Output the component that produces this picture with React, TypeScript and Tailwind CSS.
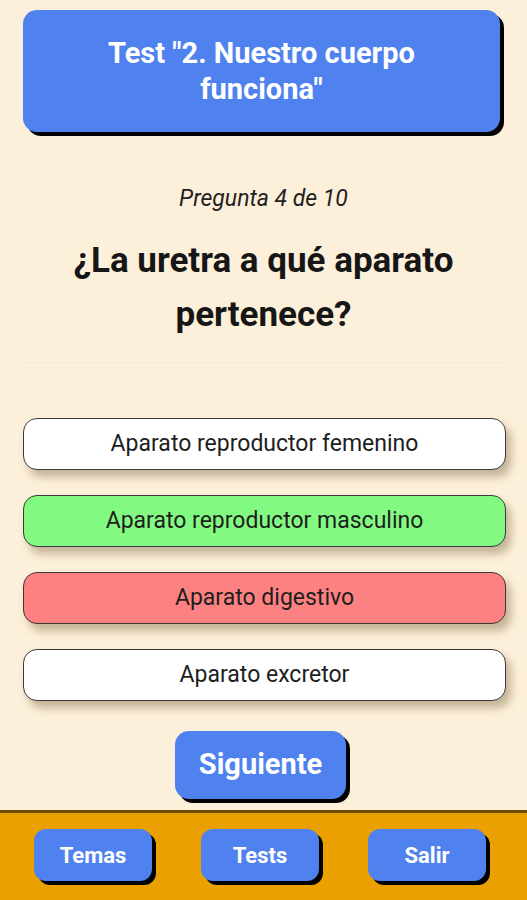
const options = [
  { label: 'Aparato reproductor femenino', bg: 'bg-white' },
  { label: 'Aparato reproductor masculino', bg: 'bg-[#82fa82]' },
  { label: 'Aparato digestivo', bg: 'bg-[#fd8181]' },
  { label: 'Aparato excretor', bg: 'bg-white' },
]

function NavButton({ label }: { label: string }) {
  return (
    <button className="w-[118px] h-[52px] rounded-[12px] bg-[#4f82ef] text-white text-[22px] font-bold shadow-[4px_4px_0_#000]">
      {label}
    </button>
  )
}

export default function App() {
  return (
    <div className="h-[900px] flex flex-col bg-[#fdf0da] font-['Roboto',sans-serif] text-[#1a1a1a]">
      <main className="flex-1 flex flex-col px-[23px] pt-[10px]">
        <div className="h-[122px] w-[477px] rounded-[14px] bg-[#4f82ef] shadow-[4px_4px_0_#000] flex items-center justify-center px-[50px]">
          <h1 className="text-white text-[29px] leading-[36px] font-bold text-center">Test "2. Nuestro cuerpo funciona"</h1>
        </div>

        <p className="mt-[54px] text-center italic text-[23px] leading-[26px] text-[#222]">Pregunta 4 de 10</p>
        <h2 className="mt-[22px] text-center font-bold text-[35px] leading-[54px] text-[#161616]">
          ¿La uretra a qué aparato pertenece?
        </h2>

        <div className="mt-[20px] h-[2px] w-[483px] -ml-px bg-[#f4ecdc]" />

        <div className="mt-[54px] flex flex-col gap-[25px]">
          {options.map((o) => (
            <button
              key={o.label}
              className={`h-[52px] w-[483px] rounded-[14px] border border-[#3a3a3a] ${o.bg} text-[23px] text-[#1e1e1e] shadow-[5px_7px_8px_rgba(90,70,30,0.35)]`}
            >
              {o.label}
            </button>
          ))}
        </div>

        <div className="mt-[30px] flex pl-[152px]">
          <button className="w-[171px] h-[68px] rounded-[14px] bg-[#4f82ef] text-white text-[29px] font-bold shadow-[4px_4px_0_#000]">
            Siguiente
          </button>
        </div>
      </main>

      <footer className="h-[90px] border-t-[3px] border-[#6b4a00] bg-[#e9a000] flex items-start pt-[16px] pl-[34px] gap-[49px]">
        <NavButton label="Temas" />
        <NavButton label="Tests" />
        <NavButton label="Salir" />
      </footer>
    </div>
  )
}
